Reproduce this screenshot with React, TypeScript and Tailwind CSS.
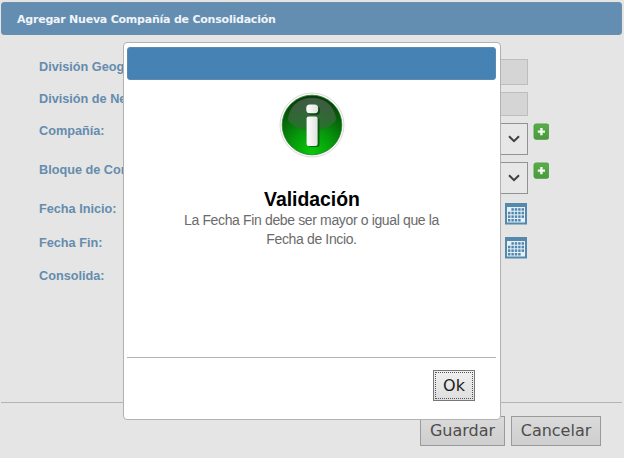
import React from "react";

type Kind = "input" | "select" | "date" | "none";

interface Field {
  label: string;
  kind: Kind;
  row: string;
  pad: string;
  box: string;
}

const FIELDS: Field[] = [
  { label: "División Geográfica:", kind: "input", row: "h-[33px]", pad: "pt-[3px]", box: "h-[26px]" },
  { label: "División de Negocio:", kind: "input", row: "h-[31px]", pad: "pt-[2px]", box: "h-[24px]" },
  { label: "Compañía:", kind: "select", row: "h-[39px]", pad: "pt-[3px]", box: "" },
  { label: "Bloque de Consolidación:", kind: "select", row: "h-[41px]", pad: "pt-[3px]", box: "" },
  { label: "Fecha Inicio:", kind: "date", row: "h-[34px]", pad: "pt-px", box: "" },
  { label: "Fecha Fin:", kind: "date", row: "h-[33px]", pad: "pt-px", box: "" },
  { label: "Consolida:", kind: "none", row: "h-[30px]", pad: "pt-px", box: "" },
];

function PlusIcon() {
  return (
    <svg width="16" height="17" viewBox="0 0 16 17" className="ml-[5px] block shrink-0">
      <defs>
        <linearGradient id="plusFill" x1="0" y1="0" x2="0" y2="1">
          <stop offset="0" stopColor="#58ad49" />
          <stop offset="1" stopColor="#4a9a3c" />
        </linearGradient>
      </defs>
      <rect x="1" y="1" width="14.8" height="15.3" rx="2" fill="url(#plusFill)" stroke="#529e47" />
      <path d="M8.4 5v7.2M4.8 8.6h7.2" stroke="#f3f8f1" strokeWidth="2.4" />
    </svg>
  );
}

function CalendarIcon() {
  const cells: React.ReactNode[] = [];
  for (let r = 0; r < 4; r++) {
    for (let c = 0; c < 5; c++) {
      if ((r === 0 && c === 0) || (r === 3 && c === 4)) continue;
      cells.push(
        <rect key={r * 5 + c} x={3 + c * 3.4} y={5.2 + r * 3.6} width="2.4" height="2.5" fill="#4f86ad" />
      );
    }
  }
  return (
    <svg width="22" height="22" viewBox="0 0 22 22" className="block">
      <rect width="22" height="21.5" fill="#5489ad" />
      <rect x="2" y="4" width="18" height="15.5" fill="#e6eff5" />
      {cells}
    </svg>
  );
}

function InfoIcon() {
  return (
    <svg width="66" height="66" viewBox="0 0 66 66" className="block">
      <defs>
        <radialGradient id="orb" cx="0.5" cy="0.95" r="0.9">
          <stop offset="0" stopColor="#08c80b" />
          <stop offset="0.4" stopColor="#079a0b" />
          <stop offset="0.75" stopColor="#06650a" />
          <stop offset="1" stopColor="#073e0b" />
        </radialGradient>
        <linearGradient id="gloss" x1="0" y1="0" x2="0" y2="1">
          <stop offset="0" stopColor="#566257" />
          <stop offset="1" stopColor="#2f6a34" />
        </linearGradient>
        <linearGradient id="mark" x1="0" y1="0" x2="1" y2="0">
          <stop offset="0" stopColor="#ffffff" />
          <stop offset="1" stopColor="#dfe3df" />
        </linearGradient>
      </defs>
      <circle cx="33" cy="33" r="32" fill="#fafafa" stroke="#d9dbd9" strokeWidth="1" />
      <circle cx="33" cy="33" r="29.8" fill="url(#orb)" stroke="#1c7c20" strokeWidth="0.8" />
      <path d="M9 28C10 14 20 6 33 6S56 14 57 28C52 35 43 38.5 33 38.5S14 35 9 28Z" fill="url(#gloss)" opacity="0.75" />
      <rect x="29" y="14.5" width="12" height="8.5" rx="3.5" fill="#0a3c0d" opacity="0.75" />
      <rect x="29.5" y="26" width="11" height="29" rx="2.5" fill="#0a4a0d" opacity="0.75" />
      <rect x="27.3" y="12.5" width="11.8" height="8.8" rx="3.5" fill="url(#mark)" />
      <rect x="27.6" y="24.5" width="11" height="29.5" rx="2" fill="url(#mark)" />
    </svg>
  );
}

function Control({ kind, box }: { kind: Kind; box: string }) {
  if (kind === "input") {
    return <div className={`mt-[2px] w-[328px] border border-[#bdbdbd] bg-[#d5d5d5] ${box}`} />;
  }
  if (kind === "select") {
    return (
      <div className="flex items-start pt-[2px]">
        <div className="flex h-[32px] w-[328px] items-center justify-end border border-[#929292] bg-[#e7e7e7] pr-[7px]">
          <svg width="12" height="8" viewBox="0 0 12 8" className="block">
            <path d="M1 1.2L6 6.2L11 1.2" fill="none" stroke="#3f3f3f" strokeWidth="2" />
          </svg>
        </div>
        <PlusIcon />
      </div>
    );
  }
  if (kind === "date") {
    return (
      <div className="flex w-[327px] items-start justify-between pt-[2px]">
        <div className="h-[24px] w-[290px] border border-[#929292] bg-[#e7e7e7]" />
        <CalendarIcon />
      </div>
    );
  }
  return null;
}

const BUTTON =
  "flex h-[30px] items-center justify-center border border-[#9a9a9a] bg-gradient-to-b from-[#dbdbdb] to-[#cecece] font-['DejaVu_Sans',sans-serif] text-[16px] text-[#4d4d4d]";

export default function App() {
  return (
    <div className="relative flex h-[458px] w-[624px] flex-col overflow-hidden bg-[#e5e5e5] font-['Liberation_Sans',Arial,sans-serif]">
      <header className="mx-px mt-[2px] flex h-[33px] w-[621px] shrink-0 items-center rounded-[3px] border border-[#6c8fae] bg-[#638db1] pl-[15px] pt-[3px]">
        <h1 className="whitespace-nowrap font-['DejaVu_Sans',sans-serif] text-[11px] font-bold tracking-[-0.22px] text-[#f1f4f7]">
          Agregar Nueva Compañía de Consolidación
        </h1>
      </header>

      <main className="flex h-[367px] shrink-0 flex-col pl-[39px] pt-[22px]">
        {FIELDS.map((f) => (
          <div key={f.label} className={`flex shrink-0 items-start ${f.row}`}>
            <div className={`w-[161px] shrink-0 whitespace-nowrap text-[12.7px] leading-[14px] font-bold text-[#648cae] ${f.pad}`}>
              {f.label}
            </div>
            <Control kind={f.kind} box={f.box} />
          </div>
        ))}
      </main>

      <footer className="mx-px flex w-[621px] items-start justify-end gap-[6px] border-t border-[#b3b3b3] pt-[13px] pr-[21px]">
        <button className={`${BUTTON} w-[85px]`}>Guardar</button>
        <button className={`${BUTTON} w-[90px]`}>Cancelar</button>
      </footer>

      <section
        role="dialog"
        className="absolute left-[123px] top-[42px] flex h-[378px] w-[378px] flex-col rounded-[4px] border border-[#b2b2b2] bg-white pr-[4px] pl-[3px] pt-[4px]"
      >
        <div className="h-[33px] shrink-0 rounded-[3px] border border-[#5b8bb3] bg-[#4682b4]" />
        <div className="flex h-[277px] shrink-0 flex-col items-center pt-[12px]">
          <InfoIcon />
          <h2 className="mt-[30px] pl-px text-[19.4px] leading-[23px] font-bold text-black">Validación</h2>
          <p className="w-[290px] text-center text-[14px] leading-[19px] tracking-[-0.36px] text-[#6b6b6b]">
            La Fecha Fin debe ser mayor o igual que la
            <br />
            Fecha de Incio.
          </p>
        </div>
        <div className="flex justify-end border-t border-[#b5b5b5] pt-[12px] pr-[21px]">
          <button className="flex h-[31px] w-[42px] items-center justify-center border border-[#777] bg-gradient-to-b from-[#f0f0f0] to-[#dedede] p-px font-['DejaVu_Sans',sans-serif] text-[16px] text-[#1c1c1c]">
            <span className="flex h-full w-full items-center justify-center border border-dotted border-[#555]">Ok</span>
          </button>
        </div>
      </section>
    </div>
  );
}
